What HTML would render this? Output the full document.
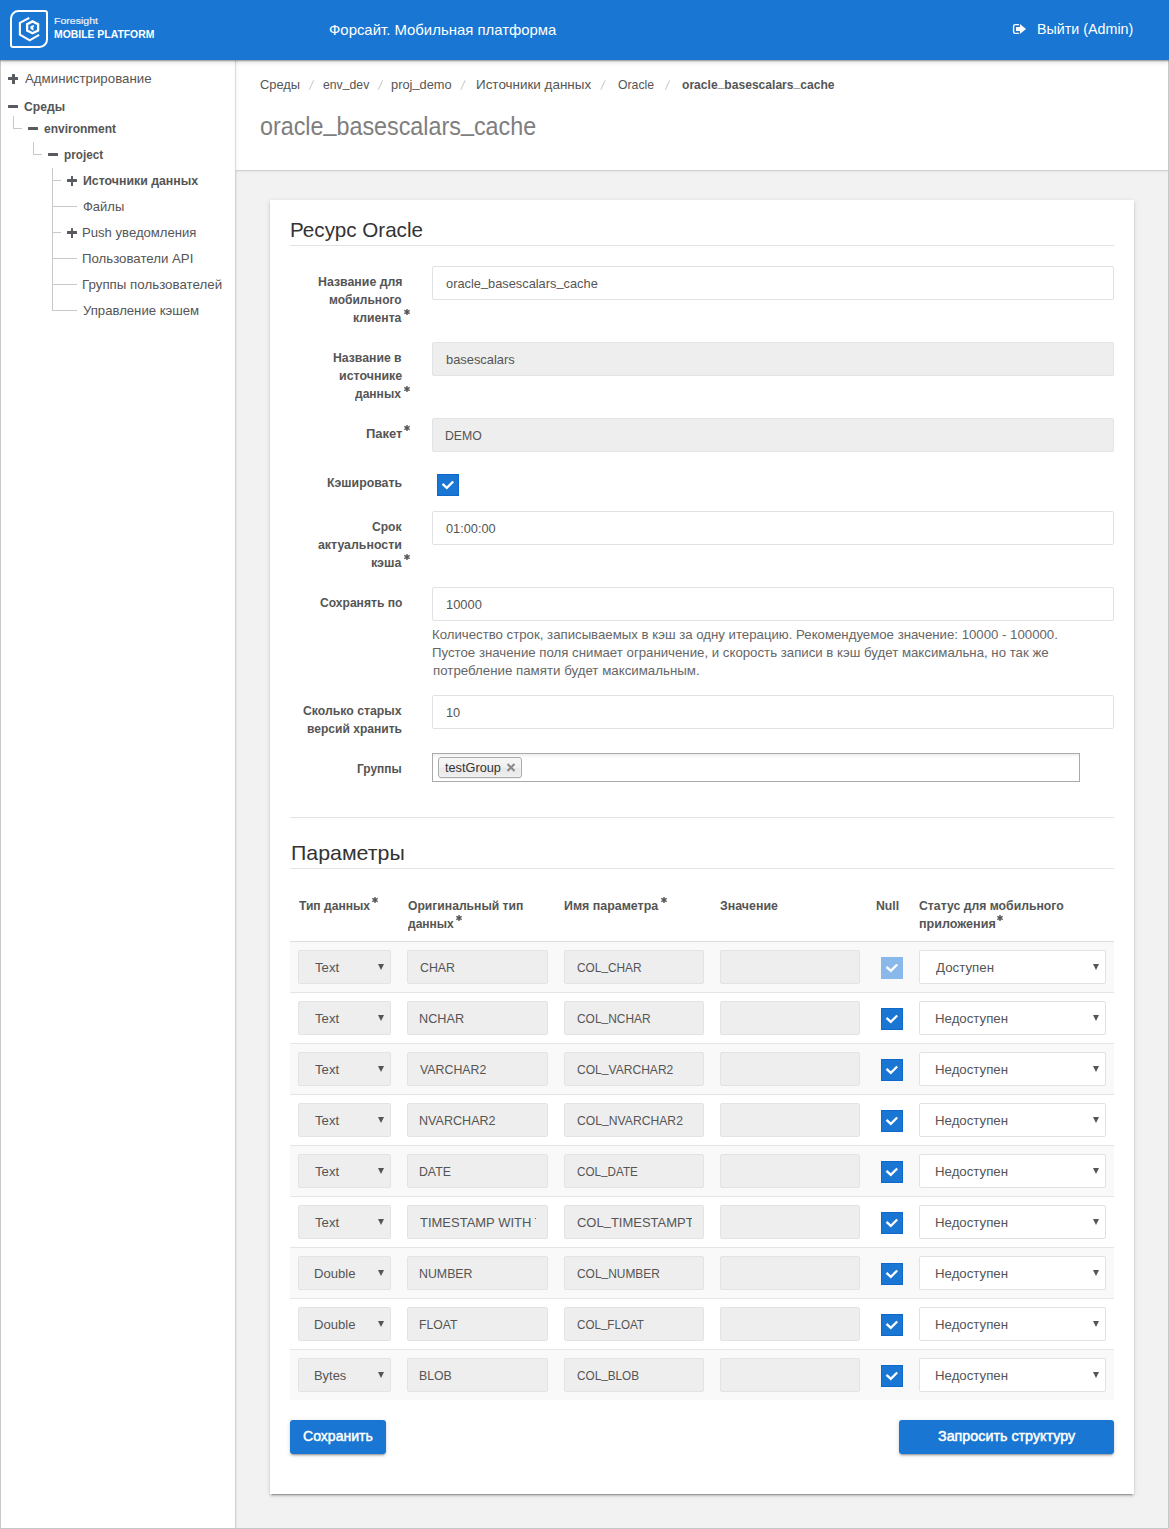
<!DOCTYPE html>
<html><head><meta charset="utf-8">
<style>
*{box-sizing:border-box;margin:0;padding:0}
html,body{width:1169px;height:1529px;overflow:hidden;background:#fff}
body{font-family:"Liberation Sans",sans-serif;position:relative;color:#555}
.a{position:absolute}
.t{position:absolute;white-space:nowrap;transform-origin:0 0;z-index:10}
#hdr{position:absolute;left:0;top:0;width:1169px;height:60px;background:#1976d2;box-shadow:0 1px 1.5px rgba(0,0,0,.36),0 2px 5px rgba(0,0,0,.14);z-index:5}
#frame{position:absolute;left:0;top:0;width:1169px;height:1529px;border:1px solid #c8c8c8;border-top:0;z-index:1}
#main{position:absolute;left:235px;top:60px;width:934px;height:1469px;background:#f2f2f2;border-left:1px solid #d3d3d3;box-shadow:inset 2px 0 3px -2px rgba(0,0,0,.12)}
#crumbs{position:absolute;left:235px;top:60px;width:933px;height:111px;background:#fff;border-bottom:1px solid #d0d0d0;border-left:1px solid #dedede;box-shadow:0 1px 2px rgba(0,0,0,.06), inset 3px 0 4px -3px rgba(0,0,0,.08)}
#card{position:absolute;left:270px;top:200px;width:864px;height:1294px;background:#fff;box-shadow:0 2px 2px 0 rgba(0,0,0,.14),0 3px 1px -2px rgba(0,0,0,.2),0 1px 5px 0 rgba(0,0,0,.12)}
.ln{position:absolute;background:#c9c9c9}
.ic{position:absolute;background:#575a5e;border-radius:0.5px}
.hr{position:absolute;height:1px;background:#e4e4e4}
.inp{position:absolute;height:34px;border:1px solid #e0e2e5;border-radius:2px;background:#fff}
.dis{background:#eee;border-color:#e1e3e6}
.chk{position:absolute;width:22px;height:22px;background:#1976d2;box-shadow:inset 0 0 0 1px rgba(0,80,190,.35)}
.chk.lt{background:#8ab8ea;box-shadow:none}
.arr{position:absolute;width:0;height:0;border-left:3px solid transparent;border-right:3px solid transparent;border-top:6px solid #555}
.row{position:absolute;left:290px;width:824px;height:51px;border-bottom:1px solid #e3e5e8}
.odd{background:#f9f9f9}
.btn{position:absolute;height:34px;background:#1976d2;border-radius:3px;box-shadow:0 2px 2px 0 rgba(0,0,0,.14),0 3px 1px -2px rgba(0,0,0,.2),0 1px 5px 0 rgba(0,0,0,.12)}
</style></head>
<body>
<div id="main"></div>
<div id="crumbs"></div>
<div id="frame"></div>
<div id="hdr">
  <svg class="a" style="left:8px;top:8px" width="42" height="42" viewBox="0 0 42 42">
    <path d="M10.5 3 H37 A2 2 0 0 1 39 5 V31.5 A7.5 7.5 0 0 1 31.5 39 H5 A2 2 0 0 1 3 37 V10.5 A7.5 7.5 0 0 1 10.5 3 Z" fill="none" stroke="#fff" stroke-width="2"/>
    <path d="M21.3 9.8 L11.9 14.9 V26.6 L21.7 32.3 L31.1 26.8" fill="none" stroke="#fff" stroke-width="2.1"/>
    <path d="M24.5 13.4 L30.1 16.2 V22.5 L24.5 25.3 L19.1 22.5 V16.2 Z" fill="none" stroke="#fff" stroke-width="2.3"/>
    <path d="M26 17.7 L23.3 18.8 V20.4 L24.6 21.2 V19.3" fill="none" stroke="#fff" stroke-width="1.7"/>
  </svg>
  <svg class="a" style="left:1012px;top:23px" width="15" height="12" viewBox="0 0 15 12">
    <path d="M6.9 1.6 H3.2 Q1.6 1.6 1.6 3.2 V8.8 Q1.6 10.4 3.2 10.4 H6.9" fill="none" stroke="#fff" stroke-width="1.4"/>
    <path d="M4 3.9 H7.9 V1 L14 6 L7.9 10.9 V8 H4 Z" fill="#fff"/>
  </svg>
</div>

<!-- sidebar tree -->
<div class="ic" style="left:8.2px;top:77px;width:10px;height:3px"></div>
<div class="ic" style="left:11.7px;top:73.5px;width:3px;height:10px"></div>
<div class="ic" style="left:8.2px;top:104.6px;width:10px;height:3px"></div>
<div class="ln" style="left:13px;top:116px;width:1px;height:13px"></div>
<div class="ln" style="left:13px;top:128px;width:9px;height:1px"></div>
<div class="ic" style="left:28px;top:127.1px;width:10px;height:3px"></div>
<div class="ln" style="left:33px;top:142px;width:1px;height:13px"></div>
<div class="ln" style="left:33px;top:154px;width:9px;height:1px"></div>
<div class="ic" style="left:47.5px;top:153.05px;width:10px;height:3px"></div>
<div class="ln" style="left:52px;top:168px;width:1px;height:143px"></div>
<div class="ln" style="left:52px;top:180px;width:9px;height:1px"></div>
<div class="ic" style="left:67px;top:179.2px;width:10px;height:2.8px"></div>
<div class="ic" style="left:70.6px;top:176px;width:2.8px;height:10px"></div>
<div class="ln" style="left:52px;top:206px;width:25px;height:1px"></div>
<div class="ln" style="left:52px;top:232px;width:9px;height:1px"></div>
<div class="ic" style="left:67px;top:231.2px;width:10px;height:2.8px"></div>
<div class="ic" style="left:70.6px;top:228px;width:2.8px;height:10px"></div>
<div class="ln" style="left:52px;top:258px;width:25px;height:1px"></div>
<div class="ln" style="left:52px;top:284px;width:25px;height:1px"></div>
<div class="ln" style="left:52px;top:310px;width:25px;height:1px"></div>

<!-- breadcrumb separators -->
<svg class="a" style="left:236px;top:60px;z-index:10" width="500" height="40" viewBox="236 60 500 40"><path d="M309.3 89.7 L313.7 80.3 M378.3 89.7 L382.7 80.3 M460.8 89.7 L465.2 80.3 M600.8 89.7 L605.2 80.3 M665.3 89.7 L669.7 80.3" stroke="#c4c4c4" stroke-width="1"/></svg>

<div id="card"></div>
<div class="hr" style="left:290px;top:245px;width:824px"></div>

<div class="inp" style="left:432px;top:266px;width:682px"></div>
<div class="inp dis" style="left:432px;top:342px;width:682px"></div>
<div class="inp dis" style="left:432px;top:418px;width:682px"></div>
<div class="chk" style="left:437px;top:474px"><svg width="22" height="22" viewBox="0 0 22 22"><path d="M5.5 9.9 L9.8 13.9 L16.2 7.5" fill="none" stroke="#fff" stroke-width="2.3"/></svg></div>
<div class="inp" style="left:432px;top:511px;width:682px"></div>
<div class="inp" style="left:432px;top:587px;width:682px"></div>
<div class="inp" style="left:432px;top:695px;width:682px"></div>
<div class="a" style="left:432px;top:753px;width:648px;height:29px;border:1px solid #aaa;background:linear-gradient(#eee 0,#fff 4px,#fff 100%)"></div>
<div class="a" style="left:438px;top:757px;width:84px;height:21px;border:1px solid #aaa;border-radius:3px;background:linear-gradient(#f4f4f4 20%,#f0f0f0 50%,#e8e8e8 52%,#eee 100%);box-shadow:0 0 2px #fff inset,0 1px 0 rgba(0,0,0,.05)"></div>
<svg class="a" style="left:506px;top:763px;z-index:11" width="10" height="9" viewBox="0 0 10 9"><path d="M1.5 1 L8.5 8 M8.5 1 L1.5 8" stroke="#888" stroke-width="2"/></svg>

<div class="hr" style="left:290px;top:817px;width:824px"></div>
<div class="hr" style="left:290px;top:868px;width:824px"></div>

<!-- table -->
<div class="a" style="left:290px;top:941px;width:824px;height:1px;background:#dcdcdc"></div>
<div class="row odd" style="top:942px"></div>
<div class="inp dis" style="left:298px;top:950px;width:93px"></div>
<div class="arr" style="left:378px;top:964px;z-index:11"></div>
<div class="inp dis" style="left:407px;top:950px;width:141px"></div>
<div class="inp dis" style="left:564px;top:950px;width:140px"></div>
<div class="inp dis" style="left:720px;top:950px;width:140px"></div>
<div class="chk lt" style="left:881px;top:957px"><svg width="22" height="22" viewBox="0 0 22 22"><path d="M5.5 9.9 L9.8 13.9 L16.2 7.5" fill="none" stroke="#fff" stroke-width="2.3"/></svg></div>
<div class="inp" style="left:919px;top:950px;width:187px"></div>
<div class="arr" style="left:1093px;top:964px;z-index:11"></div>
<div class="row" style="top:993px"></div>
<div class="inp dis" style="left:298px;top:1001px;width:93px"></div>
<div class="arr" style="left:378px;top:1015px;z-index:11"></div>
<div class="inp dis" style="left:407px;top:1001px;width:141px"></div>
<div class="inp dis" style="left:564px;top:1001px;width:140px"></div>
<div class="inp dis" style="left:720px;top:1001px;width:140px"></div>
<div class="chk" style="left:881px;top:1008px"><svg width="22" height="22" viewBox="0 0 22 22"><path d="M5.5 9.9 L9.8 13.9 L16.2 7.5" fill="none" stroke="#fff" stroke-width="2.3"/></svg></div>
<div class="inp" style="left:919px;top:1001px;width:187px"></div>
<div class="arr" style="left:1093px;top:1015px;z-index:11"></div>
<div class="row odd" style="top:1044px"></div>
<div class="inp dis" style="left:298px;top:1052px;width:93px"></div>
<div class="arr" style="left:378px;top:1066px;z-index:11"></div>
<div class="inp dis" style="left:407px;top:1052px;width:141px"></div>
<div class="inp dis" style="left:564px;top:1052px;width:140px"></div>
<div class="inp dis" style="left:720px;top:1052px;width:140px"></div>
<div class="chk" style="left:881px;top:1059px"><svg width="22" height="22" viewBox="0 0 22 22"><path d="M5.5 9.9 L9.8 13.9 L16.2 7.5" fill="none" stroke="#fff" stroke-width="2.3"/></svg></div>
<div class="inp" style="left:919px;top:1052px;width:187px"></div>
<div class="arr" style="left:1093px;top:1066px;z-index:11"></div>
<div class="row" style="top:1095px"></div>
<div class="inp dis" style="left:298px;top:1103px;width:93px"></div>
<div class="arr" style="left:378px;top:1117px;z-index:11"></div>
<div class="inp dis" style="left:407px;top:1103px;width:141px"></div>
<div class="inp dis" style="left:564px;top:1103px;width:140px"></div>
<div class="inp dis" style="left:720px;top:1103px;width:140px"></div>
<div class="chk" style="left:881px;top:1110px"><svg width="22" height="22" viewBox="0 0 22 22"><path d="M5.5 9.9 L9.8 13.9 L16.2 7.5" fill="none" stroke="#fff" stroke-width="2.3"/></svg></div>
<div class="inp" style="left:919px;top:1103px;width:187px"></div>
<div class="arr" style="left:1093px;top:1117px;z-index:11"></div>
<div class="row odd" style="top:1146px"></div>
<div class="inp dis" style="left:298px;top:1154px;width:93px"></div>
<div class="arr" style="left:378px;top:1168px;z-index:11"></div>
<div class="inp dis" style="left:407px;top:1154px;width:141px"></div>
<div class="inp dis" style="left:564px;top:1154px;width:140px"></div>
<div class="inp dis" style="left:720px;top:1154px;width:140px"></div>
<div class="chk" style="left:881px;top:1161px"><svg width="22" height="22" viewBox="0 0 22 22"><path d="M5.5 9.9 L9.8 13.9 L16.2 7.5" fill="none" stroke="#fff" stroke-width="2.3"/></svg></div>
<div class="inp" style="left:919px;top:1154px;width:187px"></div>
<div class="arr" style="left:1093px;top:1168px;z-index:11"></div>
<div class="row" style="top:1197px"></div>
<div class="inp dis" style="left:298px;top:1205px;width:93px"></div>
<div class="arr" style="left:378px;top:1219px;z-index:11"></div>
<div class="inp dis" style="left:407px;top:1205px;width:141px"></div>
<div class="inp dis" style="left:564px;top:1205px;width:140px"></div>
<div class="inp dis" style="left:720px;top:1205px;width:140px"></div>
<div class="chk" style="left:881px;top:1212px"><svg width="22" height="22" viewBox="0 0 22 22"><path d="M5.5 9.9 L9.8 13.9 L16.2 7.5" fill="none" stroke="#fff" stroke-width="2.3"/></svg></div>
<div class="inp" style="left:919px;top:1205px;width:187px"></div>
<div class="arr" style="left:1093px;top:1219px;z-index:11"></div>
<div class="row odd" style="top:1248px"></div>
<div class="inp dis" style="left:298px;top:1256px;width:93px"></div>
<div class="arr" style="left:378px;top:1270px;z-index:11"></div>
<div class="inp dis" style="left:407px;top:1256px;width:141px"></div>
<div class="inp dis" style="left:564px;top:1256px;width:140px"></div>
<div class="inp dis" style="left:720px;top:1256px;width:140px"></div>
<div class="chk" style="left:881px;top:1263px"><svg width="22" height="22" viewBox="0 0 22 22"><path d="M5.5 9.9 L9.8 13.9 L16.2 7.5" fill="none" stroke="#fff" stroke-width="2.3"/></svg></div>
<div class="inp" style="left:919px;top:1256px;width:187px"></div>
<div class="arr" style="left:1093px;top:1270px;z-index:11"></div>
<div class="row" style="top:1299px"></div>
<div class="inp dis" style="left:298px;top:1307px;width:93px"></div>
<div class="arr" style="left:378px;top:1321px;z-index:11"></div>
<div class="inp dis" style="left:407px;top:1307px;width:141px"></div>
<div class="inp dis" style="left:564px;top:1307px;width:140px"></div>
<div class="inp dis" style="left:720px;top:1307px;width:140px"></div>
<div class="chk" style="left:881px;top:1314px"><svg width="22" height="22" viewBox="0 0 22 22"><path d="M5.5 9.9 L9.8 13.9 L16.2 7.5" fill="none" stroke="#fff" stroke-width="2.3"/></svg></div>
<div class="inp" style="left:919px;top:1307px;width:187px"></div>
<div class="arr" style="left:1093px;top:1321px;z-index:11"></div>
<div class="row odd" style="top:1350px;border-bottom:0;height:50px"></div>
<div class="inp dis" style="left:298px;top:1358px;width:93px"></div>
<div class="arr" style="left:378px;top:1372px;z-index:11"></div>
<div class="inp dis" style="left:407px;top:1358px;width:141px"></div>
<div class="inp dis" style="left:564px;top:1358px;width:140px"></div>
<div class="inp dis" style="left:720px;top:1358px;width:140px"></div>
<div class="chk" style="left:881px;top:1365px"><svg width="22" height="22" viewBox="0 0 22 22"><path d="M5.5 9.9 L9.8 13.9 L16.2 7.5" fill="none" stroke="#fff" stroke-width="2.3"/></svg></div>
<div class="inp" style="left:919px;top:1358px;width:187px"></div>
<div class="arr" style="left:1093px;top:1372px;z-index:11"></div>

<div class="btn" style="left:290px;top:1420px;width:96px"></div>
<div class="btn" style="left:899px;top:1420px;width:215px"></div>

<div class="t" style="left:54.00px;top:15.60px;font-size:9.6px;line-height:9.6px;color:#e8f0fa;transform:scaleX(1.1010);-webkit-text-stroke:0.2px #e8f0fa;">Foresight</div>
<div class="t" style="left:54.00px;top:29.90px;font-size:10.3px;line-height:10.3px;font-weight:bold;color:#ffffff;transform:scaleX(1.0106);">MOBILE PLATFORM</div>
<div class="t" style="left:329.00px;top:21.80px;font-size:15px;line-height:15px;color:#ffffff;transform:scaleX(0.9939);">Форсайт. Мобильная платформа</div>
<div class="t" style="left:1036.98px;top:22.00px;font-size:14px;line-height:14px;color:#ffffff;transform:scaleX(1.0206);">Выйти (Admin)</div>
<div class="t" style="left:24.60px;top:72.00px;font-size:13px;line-height:13px;color:#555;transform:scaleX(1.0207);">Администрирование</div>
<div class="t" style="left:24.40px;top:100.00px;font-size:13px;line-height:13px;font-weight:bold;color:#555;transform:scaleX(0.9336);">Среды</div>
<div class="t" style="left:44.40px;top:122.00px;font-size:13px;line-height:13px;font-weight:bold;color:#555;transform:scaleX(0.9227);">environment</div>
<div class="t" style="left:64.00px;top:148.00px;font-size:13px;line-height:13px;font-weight:bold;color:#555;transform:scaleX(0.9020);">project</div>
<div class="t" style="left:83.30px;top:174.00px;font-size:13px;line-height:13px;font-weight:bold;color:#555;transform:scaleX(0.9478);">Источники данных</div>
<div class="t" style="left:83.30px;top:200.00px;font-size:13px;line-height:13px;color:#555;transform:scaleX(0.9985);">Файлы</div>
<div class="t" style="left:82.29px;top:226.00px;font-size:13px;line-height:13px;color:#555;transform:scaleX(1.0084);">Push уведомления</div>
<div class="t" style="left:82.28px;top:252.00px;font-size:13px;line-height:13px;color:#555;transform:scaleX(1.0176);">Пользователи API</div>
<div class="t" style="left:82.28px;top:278.00px;font-size:13px;line-height:13px;color:#555;transform:scaleX(1.0248);">Группы пользователей</div>
<div class="t" style="left:83.30px;top:304.00px;font-size:13px;line-height:13px;color:#555;transform:scaleX(1.0104);">Управление кэшем</div>
<div class="t" style="left:260.30px;top:77.50px;font-size:13px;line-height:13px;color:#555;transform:scaleX(0.9888);">Среды</div>
<div class="t" style="left:322.60px;top:77.50px;font-size:13px;line-height:13px;color:#555;transform:scaleX(0.9406);">env<span style="position:relative;top:-0.14em">_</span>dev</div>
<div class="t" style="left:391.00px;top:77.50px;font-size:13px;line-height:13px;color:#555;transform:scaleX(0.9870);">proj<span style="position:relative;top:-0.14em">_</span>demo</div>
<div class="t" style="left:476.17px;top:77.50px;font-size:13px;line-height:13px;color:#555;transform:scaleX(1.0335);">Источники данных</div>
<div class="t" style="left:618.00px;top:77.50px;font-size:13px;line-height:13px;color:#555;transform:scaleX(0.9433);">Oracle</div>
<div class="t" style="left:682.20px;top:77.50px;font-size:13px;line-height:13px;font-weight:bold;color:#555;transform:scaleX(0.9295);">oracle<span style="position:relative;top:-0.14em">_</span>basescalars<span style="position:relative;top:-0.14em">_</span>cache</div>
<div class="t" style="left:259.57px;top:113.80px;font-size:25px;line-height:25px;color:#7e7e7e;transform:scaleX(0.9327);">oracle<span style="position:relative;top:-0.14em">_</span>basescalars<span style="position:relative;top:-0.14em">_</span>cache</div>
<div class="t" style="left:289.72px;top:219.20px;font-size:21px;line-height:21px;color:#333;transform:scaleX(0.9820);">Ресурс Oracle</div>
<div class="t" style="left:318.00px;top:275.00px;font-size:13px;line-height:13px;font-weight:bold;color:#555;transform:scaleX(0.9493);">Название для</div>
<div class="t" style="left:329.30px;top:293.00px;font-size:13px;line-height:13px;font-weight:bold;color:#555;transform:scaleX(0.9238);">мобильного</div>
<div class="t" style="left:352.90px;top:311.00px;font-size:13px;line-height:13px;font-weight:bold;color:#555;transform:scaleX(0.9377);">клиента</div>
<div class="t" style="left:333.40px;top:351.00px;font-size:13px;line-height:13px;font-weight:bold;color:#555;transform:scaleX(0.9401);">Название в</div>
<div class="t" style="left:339.00px;top:369.00px;font-size:13px;line-height:13px;font-weight:bold;color:#555;transform:scaleX(0.9555);">источнике</div>
<div class="t" style="left:355.40px;top:387.00px;font-size:13px;line-height:13px;font-weight:bold;color:#555;transform:scaleX(0.9267);">данных</div>
<div class="t" style="left:365.90px;top:427.00px;font-size:13px;line-height:13px;font-weight:bold;color:#555;transform:scaleX(0.9989);">Пакет</div>
<div class="t" style="left:327.00px;top:476.00px;font-size:13px;line-height:13px;font-weight:bold;color:#555;transform:scaleX(0.9465);">Кэшировать</div>
<div class="t" style="left:372.00px;top:520.00px;font-size:13px;line-height:13px;font-weight:bold;color:#555;transform:scaleX(0.9297);">Срок</div>
<div class="t" style="left:318.20px;top:538.00px;font-size:13px;line-height:13px;font-weight:bold;color:#555;transform:scaleX(0.9503);">актуальности</div>
<div class="t" style="left:370.80px;top:556.00px;font-size:13px;line-height:13px;font-weight:bold;color:#555;transform:scaleX(0.9645);">кэша</div>
<div class="t" style="left:319.60px;top:596.00px;font-size:13px;line-height:13px;font-weight:bold;color:#555;transform:scaleX(0.9293);">Сохранять по</div>
<div class="t" style="left:302.70px;top:704.00px;font-size:13px;line-height:13px;font-weight:bold;color:#555;transform:scaleX(0.9426);">Сколько старых</div>
<div class="t" style="left:307.00px;top:722.00px;font-size:13px;line-height:13px;font-weight:bold;color:#555;transform:scaleX(0.9275);">версий хранить</div>
<div class="t" style="left:357.40px;top:762.00px;font-size:13px;line-height:13px;font-weight:bold;color:#555;transform:scaleX(0.9181);">Группы</div>
<div class="t" style="left:445.80px;top:277.00px;font-size:13px;line-height:13px;color:#555;transform:scaleX(0.9857);">oracle<span style="position:relative;top:-0.14em">_</span>basescalars<span style="position:relative;top:-0.14em">_</span>cache</div>
<div class="t" style="left:445.80px;top:353.00px;font-size:13px;line-height:13px;color:#555;transform:scaleX(0.9905);">basescalars</div>
<div class="t" style="left:444.56px;top:429.00px;font-size:13px;line-height:13px;color:#555;transform:scaleX(0.9422);">DEMO</div>
<div class="t" style="left:445.50px;top:522.00px;font-size:13px;line-height:13px;color:#555;transform:scaleX(0.9827);">01:00:00</div>
<div class="t" style="left:446.00px;top:598.00px;font-size:13px;line-height:13px;color:#555;transform:scaleX(0.9911);">10000</div>
<div class="t" style="left:431.78px;top:628.30px;font-size:13px;line-height:13px;color:#666;transform:scaleX(1.0162);">Количество строк, записываемых в кэш за одну итерацию. Рекомендуемое значение: 10000 - 100000.</div>
<div class="t" style="left:431.78px;top:646.00px;font-size:13px;line-height:13px;color:#666;transform:scaleX(1.0177);">Пустое значение поля снимает ограничение, и скорость записи в кэш будет максимальна, но так же</div>
<div class="t" style="left:432.80px;top:663.70px;font-size:13px;line-height:13px;color:#666;transform:scaleX(1.0222);">потребление памяти будет максимальным.</div>
<div class="t" style="left:446.00px;top:706.00px;font-size:13px;line-height:13px;color:#555;transform:scaleX(0.9838);">10</div>
<div class="t" style="left:444.70px;top:761.50px;font-size:12.5px;line-height:12.5px;color:#333;transform:scaleX(1.0175);">testGroup</div>
<div class="t" style="left:290.58px;top:842.20px;font-size:21px;line-height:21px;color:#333;transform:scaleX(1.0159);">Параметры</div>
<div class="t" style="left:298.50px;top:899.30px;font-size:13px;line-height:13px;font-weight:bold;color:#555;transform:scaleX(0.9302);">Тип данных</div>
<div class="t" style="left:407.50px;top:899.30px;font-size:13px;line-height:13px;font-weight:bold;color:#555;transform:scaleX(0.9332);">Оригинальный тип</div>
<div class="t" style="left:407.50px;top:917.30px;font-size:13px;line-height:13px;font-weight:bold;color:#555;transform:scaleX(0.9247);">данных</div>
<div class="t" style="left:564.40px;top:899.30px;font-size:13px;line-height:13px;font-weight:bold;color:#555;transform:scaleX(0.9548);">Имя параметра</div>
<div class="t" style="left:720.40px;top:899.30px;font-size:13px;line-height:13px;font-weight:bold;color:#555;transform:scaleX(0.9533);">Значение</div>
<div class="t" style="left:876.40px;top:899.30px;font-size:13px;line-height:13px;font-weight:bold;color:#555;transform:scaleX(0.9440);">Null</div>
<div class="t" style="left:919.00px;top:899.30px;font-size:13px;line-height:13px;font-weight:bold;color:#555;transform:scaleX(0.9413);">Статус для мобильного</div>
<div class="t" style="left:919.00px;top:917.30px;font-size:13px;line-height:13px;font-weight:bold;color:#555;transform:scaleX(0.9675);">приложения</div>
<div class="t" style="left:315.20px;top:961.00px;font-size:13px;line-height:13px;color:#555;transform:scaleX(1.0111);">Text</div>
<div class="t" style="left:419.90px;top:961.00px;font-size:13px;line-height:13px;color:#555;transform:scaleX(0.9493);">CHAR</div>
<div class="t" style="left:577.20px;top:961.00px;font-size:13px;line-height:13px;color:#555;transform:scaleX(0.9118);">COL<span style="position:relative;top:-0.14em">_</span>CHAR</div>
<div class="t" style="left:936.20px;top:961.00px;font-size:13px;line-height:13px;color:#555;transform:scaleX(1.0221);">Доступен</div>
<div class="t" style="left:315.20px;top:1012.00px;font-size:13px;line-height:13px;color:#555;transform:scaleX(1.0111);">Text</div>
<div class="t" style="left:418.93px;top:1012.00px;font-size:13px;line-height:13px;color:#555;transform:scaleX(0.9747);">NCHAR</div>
<div class="t" style="left:577.20px;top:1012.00px;font-size:13px;line-height:13px;color:#555;transform:scaleX(0.9186);">COL<span style="position:relative;top:-0.14em">_</span>NCHAR</div>
<div class="t" style="left:935.18px;top:1012.00px;font-size:13px;line-height:13px;color:#555;transform:scaleX(1.0182);">Недоступен</div>
<div class="t" style="left:315.20px;top:1063.00px;font-size:13px;line-height:13px;color:#555;transform:scaleX(1.0111);">Text</div>
<div class="t" style="left:419.90px;top:1063.00px;font-size:13px;line-height:13px;color:#555;transform:scaleX(0.9497);">VARCHAR2</div>
<div class="t" style="left:577.20px;top:1063.00px;font-size:13px;line-height:13px;color:#555;transform:scaleX(0.9280);">COL<span style="position:relative;top:-0.14em">_</span>VARCHAR2</div>
<div class="t" style="left:935.18px;top:1063.00px;font-size:13px;line-height:13px;color:#555;transform:scaleX(1.0182);">Недоступен</div>
<div class="t" style="left:315.20px;top:1114.00px;font-size:13px;line-height:13px;color:#555;transform:scaleX(1.0111);">Text</div>
<div class="t" style="left:418.93px;top:1114.00px;font-size:13px;line-height:13px;color:#555;transform:scaleX(0.9668);">NVARCHAR2</div>
<div class="t" style="left:577.20px;top:1114.00px;font-size:13px;line-height:13px;color:#555;transform:scaleX(0.9358);">COL<span style="position:relative;top:-0.14em">_</span>NVARCHAR2</div>
<div class="t" style="left:935.18px;top:1114.00px;font-size:13px;line-height:13px;color:#555;transform:scaleX(1.0182);">Недоступен</div>
<div class="t" style="left:315.20px;top:1165.00px;font-size:13px;line-height:13px;color:#555;transform:scaleX(1.0111);">Text</div>
<div class="t" style="left:418.96px;top:1165.00px;font-size:13px;line-height:13px;color:#555;transform:scaleX(0.9444);">DATE</div>
<div class="t" style="left:577.20px;top:1165.00px;font-size:13px;line-height:13px;color:#555;transform:scaleX(0.8986);">COL<span style="position:relative;top:-0.14em">_</span>DATE</div>
<div class="t" style="left:935.18px;top:1165.00px;font-size:13px;line-height:13px;color:#555;transform:scaleX(1.0182);">Недоступен</div>
<div class="t" style="left:315.20px;top:1216.00px;font-size:13px;line-height:13px;color:#555;transform:scaleX(1.0111);">Text</div>
<div class="a" style="left:408px;top:1205px;width:128px;height:34px;overflow:hidden;z-index:10"><div class="t" style="left:11.90px;top:11.00px;font-size:13px;line-height:13px;color:#555;transform:scaleX(0.9985)">TIMESTAMP WITH TIME ZONE</div></div>
<div class="a" style="left:565px;top:1205px;width:127px;height:34px;overflow:hidden;z-index:10"><div class="t" style="left:12.20px;top:11.00px;font-size:13px;line-height:13px;color:#555;transform:scaleX(0.9985)">COL<span style="position:relative;top:-0.14em">_</span>TIMESTAMPTZ</div></div>
<div class="t" style="left:935.18px;top:1216.00px;font-size:13px;line-height:13px;color:#555;transform:scaleX(1.0182);">Недоступен</div>
<div class="t" style="left:314.19px;top:1267.00px;font-size:13px;line-height:13px;color:#555;transform:scaleX(1.0083);">Double</div>
<div class="t" style="left:418.95px;top:1267.00px;font-size:13px;line-height:13px;color:#555;transform:scaleX(0.9500);">NUMBER</div>
<div class="t" style="left:577.20px;top:1267.00px;font-size:13px;line-height:13px;color:#555;transform:scaleX(0.9176);">COL<span style="position:relative;top:-0.14em">_</span>NUMBER</div>
<div class="t" style="left:935.18px;top:1267.00px;font-size:13px;line-height:13px;color:#555;transform:scaleX(1.0182);">Недоступен</div>
<div class="t" style="left:314.19px;top:1318.00px;font-size:13px;line-height:13px;color:#555;transform:scaleX(1.0083);">Double</div>
<div class="t" style="left:418.96px;top:1318.00px;font-size:13px;line-height:13px;color:#555;transform:scaleX(0.9378);">FLOAT</div>
<div class="t" style="left:577.20px;top:1318.00px;font-size:13px;line-height:13px;color:#555;transform:scaleX(0.8939);">COL<span style="position:relative;top:-0.14em">_</span>FLOAT</div>
<div class="t" style="left:935.18px;top:1318.00px;font-size:13px;line-height:13px;color:#555;transform:scaleX(1.0182);">Недоступен</div>
<div class="t" style="left:314.21px;top:1369.00px;font-size:13px;line-height:13px;color:#555;transform:scaleX(0.9934);">Bytes</div>
<div class="t" style="left:418.95px;top:1369.00px;font-size:13px;line-height:13px;color:#555;transform:scaleX(0.9451);">BLOB</div>
<div class="t" style="left:577.20px;top:1369.00px;font-size:13px;line-height:13px;color:#555;transform:scaleX(0.9048);">COL<span style="position:relative;top:-0.14em">_</span>BLOB</div>
<div class="t" style="left:935.18px;top:1369.00px;font-size:13px;line-height:13px;color:#555;transform:scaleX(1.0182);">Недоступен</div>
<div class="t" style="left:303.40px;top:1428.90px;font-size:14px;line-height:14px;color:#fff;transform:scaleX(1.0032);-webkit-text-stroke:0.45px #fff;">Сохранить</div>
<div class="t" style="left:938.20px;top:1428.90px;font-size:14px;line-height:14px;color:#fff;transform:scaleX(1.0218);-webkit-text-stroke:0.45px #fff;">Запросить структуру</div>
<svg class="a" style="left:401.80px;top:307.25px;z-index:10" width="10" height="10" viewBox="0 0 10 10"><path d="M5.00 1.90 L5.00 8.10 M7.68 3.45 L2.32 6.55 M7.68 6.55 L2.32 3.45 " stroke="#555" stroke-width="1.4"/></svg>
<svg class="a" style="left:401.80px;top:383.85px;z-index:10" width="10" height="10" viewBox="0 0 10 10"><path d="M5.00 1.90 L5.00 8.10 M7.68 3.45 L2.32 6.55 M7.68 6.55 L2.32 3.45 " stroke="#555" stroke-width="1.4"/></svg>
<svg class="a" style="left:401.55px;top:422.85px;z-index:10" width="10" height="10" viewBox="0 0 10 10"><path d="M5.00 1.90 L5.00 8.10 M7.68 3.45 L2.32 6.55 M7.68 6.55 L2.32 3.45 " stroke="#555" stroke-width="1.4"/></svg>
<svg class="a" style="left:401.55px;top:552.25px;z-index:10" width="10" height="10" viewBox="0 0 10 10"><path d="M5.00 1.90 L5.00 8.10 M7.68 3.45 L2.32 6.55 M7.68 6.55 L2.32 3.45 " stroke="#555" stroke-width="1.4"/></svg>
<svg class="a" style="left:369.95px;top:894.95px;z-index:10" width="10" height="10" viewBox="0 0 10 10"><path d="M5.00 1.90 L5.00 8.10 M7.68 3.45 L2.32 6.55 M7.68 6.55 L2.32 3.45 " stroke="#555" stroke-width="1.4"/></svg>
<svg class="a" style="left:453.75px;top:913.45px;z-index:10" width="10" height="10" viewBox="0 0 10 10"><path d="M5.00 1.90 L5.00 8.10 M7.68 3.45 L2.32 6.55 M7.68 6.55 L2.32 3.45 " stroke="#555" stroke-width="1.4"/></svg>
<svg class="a" style="left:659.05px;top:894.95px;z-index:10" width="10" height="10" viewBox="0 0 10 10"><path d="M5.00 1.90 L5.00 8.10 M7.68 3.45 L2.32 6.55 M7.68 6.55 L2.32 3.45 " stroke="#555" stroke-width="1.4"/></svg>
<svg class="a" style="left:995.00px;top:913.45px;z-index:10" width="10" height="10" viewBox="0 0 10 10"><path d="M5.00 1.90 L5.00 8.10 M7.68 3.45 L2.32 6.55 M7.68 6.55 L2.32 3.45 " stroke="#555" stroke-width="1.4"/></svg>
</body></html>
